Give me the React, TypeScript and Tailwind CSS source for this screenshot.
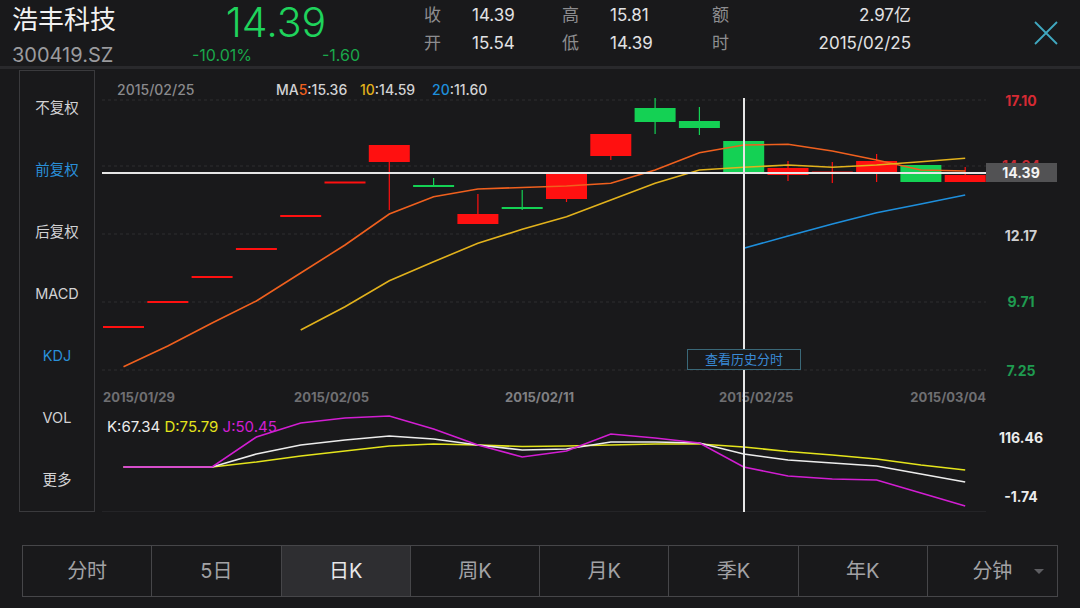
import React from 'react';

type Candle = { t: number; b: number; wt?: number; wb?: number; up: boolean };

const STEP = 44.3;
const X0 = 104;
const CW = 41;
const cx = (i: number) => X0 + CW / 2 + STEP * i;

const candles: Candle[] = [
  { t: 326, b: 328, up: true },
  { t: 301, b: 303, up: true },
  { t: 276, b: 278, up: true },
  { t: 248, b: 250, up: true },
  { t: 215, b: 217, up: true },
  { t: 181.5, b: 183.5, up: true },
  { t: 145, b: 162, wt: 145, wb: 210, up: true },
  { t: 185, b: 187, wt: 178, wb: 187, up: false },
  { t: 214, b: 224, wt: 194, wb: 224, up: true },
  { t: 207, b: 209, wt: 190, wb: 210, up: false },
  { t: 173, b: 199, wt: 173, wb: 202, up: true },
  { t: 134, b: 156, wt: 134, wb: 160, up: true },
  { t: 108, b: 122, wt: 98, wb: 134, up: false },
  { t: 121, b: 128, wt: 107, wb: 135, up: false },
  { t: 141, b: 172, up: false },
  { t: 168, b: 175, wt: 161, wb: 181, up: true },
  { t: 171.5, b: 173, wt: 162, wb: 183, up: true },
  { t: 161, b: 172, wt: 154, wb: 182, up: true },
  { t: 165, b: 182, up: false },
  { t: 175, b: 182, wt: 167, wb: 182, up: true },
];

const ma5 = [366.7, 346, 323, 301, 273, 245, 214, 196.7, 189, 187.5, 186, 183.3, 170, 152.7, 145, 144.3, 151, 160, 170, 171];
const ma10 = [330, 306.7, 280.7, 261.7, 243.3, 229.3, 216.7, 200, 183.3, 170, 167.3, 165, 167.3, 165, 161.7, 158.3];
const ma20 = [248.3, 236, 224, 212.7, 204, 195];

const kLine = [467, 467, 467, 454, 445, 440, 436, 439, 445, 450, 449, 442, 442, 443, 454, 460, 463, 466, 474, 482];
const dLine = [467, 467, 467, 462, 456, 451, 446, 444, 445, 446.5, 446, 445, 444, 444, 447, 451.5, 455, 459, 465, 470];
const jLine = [467, 467, 467, 437, 423, 418, 416, 429, 445, 457, 451, 434, 438, 443, 467, 476, 479, 480, 493, 506];

const pts = (ys: number[], start = 0) => ys.map((y, i) => `${cx(i + start).toFixed(1)},${y}`).join(' ');

const RED = '#ff1010';
const GREEN = '#14d154';

const sideItems = [
  { label: '不复权', active: false },
  { label: '前复权', active: true },
  { label: '后复权', active: false },
  { label: 'MACD', active: false },
  { label: 'KDJ', active: true },
  { label: 'VOL', active: false },
  { label: '更多', active: false },
];

const tabs = ['分时', '5日', '日K', '周K', '月K', '季K', '年K', '分钟'];

const Chart = () => {
  const gridYs = [100, 166, 234, 302, 370];
  return (
    <svg width={977} height={442} viewBox="103 70 977 442" className="block">
      {gridYs.map((y) => (
        <line key={y} x1={103} x2={987} y1={y} y2={y} stroke="#2e2e31" strokeWidth={1} strokeDasharray="3 3" />
      ))}
      <line x1={103} x2={987} y1={511.5} y2={511.5} stroke="#242427" strokeWidth={1} />

      {candles.map((c, i) => {
        const color = c.up ? RED : GREEN;
        const left = X0 + STEP * i;
        return (
          <g key={i}>
            {c.wt !== undefined && c.wb !== undefined && (
              <line x1={cx(i)} x2={cx(i)} y1={c.wt} y2={c.wb} stroke={color} strokeWidth={1.2} />
            )}
            <rect x={left} y={c.t} width={CW} height={c.b - c.t} fill={color} />
          </g>
        );
      })}

      <polyline points={pts(ma5)} fill="none" stroke="#f0601e" strokeWidth={1.6} />
      <polyline points={pts(ma10, 4)} fill="none" stroke="#e2b21c" strokeWidth={1.6} />
      <polyline points={pts(ma20, 14)} fill="none" stroke="#1e8fdc" strokeWidth={1.6} />

      <text x={118} y={95} fontSize={14} fontWeight={500} fill="#8a8a8d">2015/02/25</text>
      <g fontSize={14} fontWeight={500} fill="#d2d2d4">
        <text x={277} y={95}>MA<tspan fill="#f0601e">5</tspan>:15.36</text>
        <text x={361} y={95}><tspan fill="#e2b21c">10</tspan>:14.59</text>
        <text x={433} y={95}><tspan fill="#1e8fdc">20</tspan>:11.60</text>
      </g>

      <g fontSize={14} fontWeight={700} textAnchor="middle">
        <text x={1022} y={106} fill="#d52a33">17.10</text>
        <text x={1022} y={171} fill="#c52a33">14.64</text>
        <text x={1022} y={241} fill="#cfcfd1">12.17</text>
        <text x={1022} y={307} fill="#1f9b50">9.71</text>
        <text x={1022} y={376} fill="#1f9b50">7.25</text>
      </g>

      <g fontSize={13} fontWeight={700} fill="#6f6f72">
        <text x={104} y={402}>2015/01/29</text>
        <text x={295} y={402}>2015/02/05</text>
        <text x={506} y={402} fill="#808083">2015/02/11</text>
        <text x={720} y={402}>2015/02/25</text>
        <text x={987} y={402} textAnchor="end">2015/03/04</text>
      </g>

      <polyline points={pts(dLine)} fill="none" stroke="#e4e41c" strokeWidth={1.6} />
      <polyline points={pts(kLine)} fill="none" stroke="#ececec" strokeWidth={1.6} />
      <polyline points={pts(jLine)} fill="none" stroke="#d21ed2" strokeWidth={1.6} />

      <text x={108} y={432} fontSize={15}>
        <tspan fill="#ececec">K:67.34 </tspan>
        <tspan fill="#e4e41c">D:75.79 </tspan>
        <tspan fill="#d21ed2">J:50.45</tspan>
      </text>

      <g fontSize={14} fontWeight={700} textAnchor="middle" fill="#ececec">
        <text x={1022} y={443}>116.46</text>
        <text x={1022} y={502}>-1.74</text>
      </g>

      <line x1={103} x2={987} y1={173} y2={173} stroke="#e6e6e6" strokeWidth={2} />
      <line x1={745} x2={745} y1={98} y2={512} stroke="#e6e6e6" strokeWidth={2} />

      <rect x={987} y={163} width={71} height={19} fill="#525254" />
      <text x={1022} y={178} fontSize={14} fontWeight={700} textAnchor="middle" fill="#f4f4f4">14.39</text>

      <rect x={688.5} y={349.5} width={113} height={20} fill="#19191b" stroke="#3a6878" strokeWidth={1} />
      <text x={745} y={364} fontSize={13} textAnchor="middle" fill="#3a8ad6">查看历史分时</text>
    </svg>
  );
};

const App = () => {
  return (
    <div className="w-[1080px] h-[608px] overflow-hidden bg-[#19191b] font-[Inter,'Noto_Sans_CJK_SC',sans-serif] flex flex-col">
      {/* header */}
      <div className="flex h-[69px] shrink-0 border-b-[3px] border-[#29292c]">
        <div className="w-[180px] pl-[12px] pt-[5px]">
          <div className="text-[26px] leading-[30px] text-[#f2f2f2]">浩丰科技</div>
          <div className="mt-[9px] text-[20px] leading-[22px] text-[#9b9b9e]">300419.SZ</div>
        </div>
        <div className="ml-[12px] w-[168px]">
          <div className="text-center text-[41px] leading-[44px] font-light text-[#1fd35c]">14.39</div>
          <div className="mt-[2px] flex justify-between text-[16px] leading-[18px] text-[#1aa84b]">
            <span>-10.01%</span>
            <span>-1.60</span>
          </div>
        </div>
        <div className="ml-[64px] pt-[2px] grid grid-cols-[48px_90px_48px_102px_48px_151px] auto-rows-[28px] items-center text-[17px]">
          <span className="text-[#8d8d90]">收</span>
          <span className="text-[#e2e2e4]">14.39</span>
          <span className="text-[#8d8d90]">高</span>
          <span className="text-[#e2e2e4]">15.81</span>
          <span className="text-[#8d8d90]">额</span>
          <span className="text-right text-[#e2e2e4]">2.97亿</span>
          <span className="text-[#8d8d90]">开</span>
          <span className="text-[#e2e2e4]">15.54</span>
          <span className="text-[#8d8d90]">低</span>
          <span className="text-[#e2e2e4]">14.39</span>
          <span className="text-[#8d8d90]">时</span>
          <span className="text-right text-[#e2e2e4]">2015/02/25</span>
        </div>
        <div className="ml-auto mr-[22px] mt-[21px]">
          <svg width={24} height={24} viewBox="0 0 24 24">
            <path d="M1 1 L23 23 M23 1 L1 23" stroke="#40a8c0" strokeWidth={1.8} fill="none" />
          </svg>
        </div>
      </div>

      {/* chart body */}
      <div className="flex mt-[1px]">
        <div className="ml-[19px] w-[76px] h-[442px] border border-[#3a3a3d] pt-[6px] flex flex-col">
          {sideItems.map((it) => (
            <div
              key={it.label}
              className={`h-[62px] flex items-center justify-center text-[14.5px] ${it.active ? 'text-[#2a8fd8]' : 'text-[#d2d2d4]'}`}
            >
              {it.label}
            </div>
          ))}
        </div>
        <div className="ml-[7px]">
          <Chart />
        </div>
      </div>

      {/* period tabs */}
      <div className="mt-[33px] mx-[22px] h-[52px] grid grid-cols-8 border border-[#464649]">
        {tabs.map((t, i) => (
          <div
            key={t}
            className={`relative flex items-center justify-center text-[20px] ${i < 7 ? 'border-r border-[#464649]' : ''} ${t === '日K' ? 'bg-[#2e2e31] text-[#e8e8ea]' : 'text-[#a2a2a5]'}`}
          >
            {t}
            {t === '分钟' && (
              <span className="absolute right-[13px] top-[23px] w-0 h-0 border-l-[5px] border-r-[5px] border-t-[5px] border-l-transparent border-r-transparent border-t-[#5e5e62]" />
            )}
          </div>
        ))}
      </div>
    </div>
  );
};

export default App;
